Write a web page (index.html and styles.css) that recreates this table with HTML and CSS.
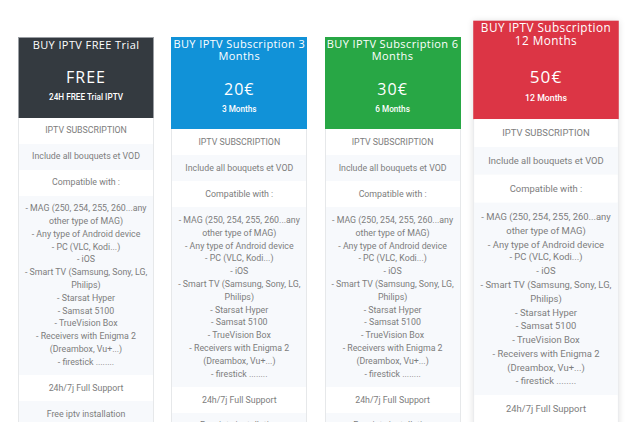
FILE: index.html
```html
<!DOCTYPE html>
<html>
<head>
<meta charset="utf-8">
<link rel="stylesheet" href="styles.css">
</head>
<body>
<div class="plans">
  <div class="card">
    <div class="head dark">
      <div class="title">BUY IPTV FREE Trial</div>
      <div class="price">FREE</div>
      <div class="sub">24H FREE Trial IPTV</div>
    </div>
    <div class="row">IPTV SUBSCRIPTION</div>
    <div class="row alt">Include all bouquets et VOD</div>
    <div class="row">Compatible with :</div>
    <div class="row alt">- MAG (250, 254, 255, 260...any other type of MAG)<br>- Any type of Android device<br>- PC (VLC, Kodi...)<br>- iOS<br>- Smart TV (Samsung, Sony, LG, Philips)<br>- Starsat Hyper<br>- Samsat 5100<br>- TrueVision Box<br>- Receivers with Enigma 2 (Dreambox, Vu+...)<br>- firestick ........</div>
    <div class="row">24h/7j Full Support</div>
    <div class="row alt">Free iptv installation</div>
  </div>
  <div class="card">
    <div class="head blue">
      <div class="title">BUY IPTV Subscription 3 Months</div>
      <div class="price">20€</div>
      <div class="sub">3 Months</div>
    </div>
    <div class="row">IPTV SUBSCRIPTION</div>
    <div class="row alt">Include all bouquets et VOD</div>
    <div class="row">Compatible with :</div>
    <div class="row alt">- MAG (250, 254, 255, 260...any other type of MAG)<br>- Any type of Android device<br>- PC (VLC, Kodi...)<br>- iOS<br>- Smart TV (Samsung, Sony, LG, Philips)<br>- Starsat Hyper<br>- Samsat 5100<br>- TrueVision Box<br>- Receivers with Enigma 2 (Dreambox, Vu+...)<br>- firestick ........</div>
    <div class="row">24h/7j Full Support</div>
    <div class="row alt">Free iptv installation</div>
  </div>
  <div class="card">
    <div class="head green">
      <div class="title">BUY IPTV Subscription 6 Months</div>
      <div class="price">30€</div>
      <div class="sub">6 Months</div>
    </div>
    <div class="row">IPTV SUBSCRIPTION</div>
    <div class="row alt">Include all bouquets et VOD</div>
    <div class="row">Compatible with :</div>
    <div class="row alt">- MAG (250, 254, 255, 260...any other type of MAG)<br>- Any type of Android device<br>- PC (VLC, Kodi...)<br>- iOS<br>- Smart TV (Samsung, Sony, LG, Philips)<br>- Starsat Hyper<br>- Samsat 5100<br>- TrueVision Box<br>- Receivers with Enigma 2 (Dreambox, Vu+...)<br>- firestick ........</div>
    <div class="row">24h/7j Full Support</div>
    <div class="row alt">Free iptv installation</div>
  </div>
  <div class="card featured">
    <div class="head red">
      <div class="title">BUY IPTV Subscription 12 Months</div>
      <div class="price">50€</div>
      <div class="sub">12 Months</div>
    </div>
    <div class="row">IPTV SUBSCRIPTION</div>
    <div class="row alt">Include all bouquets et VOD</div>
    <div class="row">Compatible with :</div>
    <div class="row alt">- MAG (250, 254, 255, 260...any other type of MAG)<br>- Any type of Android device<br>- PC (VLC, Kodi...)<br>- iOS<br>- Smart TV (Samsung, Sony, LG, Philips)<br>- Starsat Hyper<br>- Samsat 5100<br>- TrueVision Box<br>- Receivers with Enigma 2 (Dreambox, Vu+...)<br>- firestick ........</div>
    <div class="row">24h/7j Full Support</div>
    <div class="row alt">Free iptv installation</div>
  </div>
</div>
</body>
</html>
```
FILE: styles.css
```css
html, body {
  margin: 0;
  padding: 0;
  background: #fff;
}
body {
  font-family: Roboto, "Liberation Sans", sans-serif;
  overflow: hidden;
}
.plans {
  display: flex;
  align-items: flex-start;
  gap: 17.3px;
  padding: 37px 0 0 18px;
}
.card {
  width: 136px;
  flex: none;
  box-sizing: border-box;
  border: 1px solid #e6e8ea;
  background: #fff;
}
.featured {
  transform: scale(1.07);
  transform-origin: 50% 233px;
  box-shadow: 0 0 6px rgba(0, 0, 0, 0.12);
  position: relative;
}
.head {
  color: #fff;
  text-align: center;
  padding: 0 0 14.5px;
  margin: -1px -1px 0;
}
.dark { background: #343a40; border: 1px solid #9a9ea3; border-bottom: 0; }
.blue { background: #1192d8; }
.green { background: #28a745; }
.red { background: #dc3545; }
.title {
  font-family: "Open Sans", sans-serif;
  font-size: 11px;
  letter-spacing: 0.4px;
  line-height: 12.7px;
  padding-top: 0.5px;
}
.price {
  font-family: "Open Sans", sans-serif;
  font-size: 16px;
  letter-spacing: 1px;
  line-height: 19px;
  margin-top: 17px;
}
.sub {
  font-size: 8.2px;
  font-weight: 500;
  line-height: 12px;
  margin-top: 4px;
}
.row {
  text-align: center;
  color: #7d7d7d;
  font-size: 8.8px;
  line-height: 12.8px;
  padding: 6.6px 4px;
  background: #fff;
}
.row.alt {
  background: #f7f9fc;
}
```
